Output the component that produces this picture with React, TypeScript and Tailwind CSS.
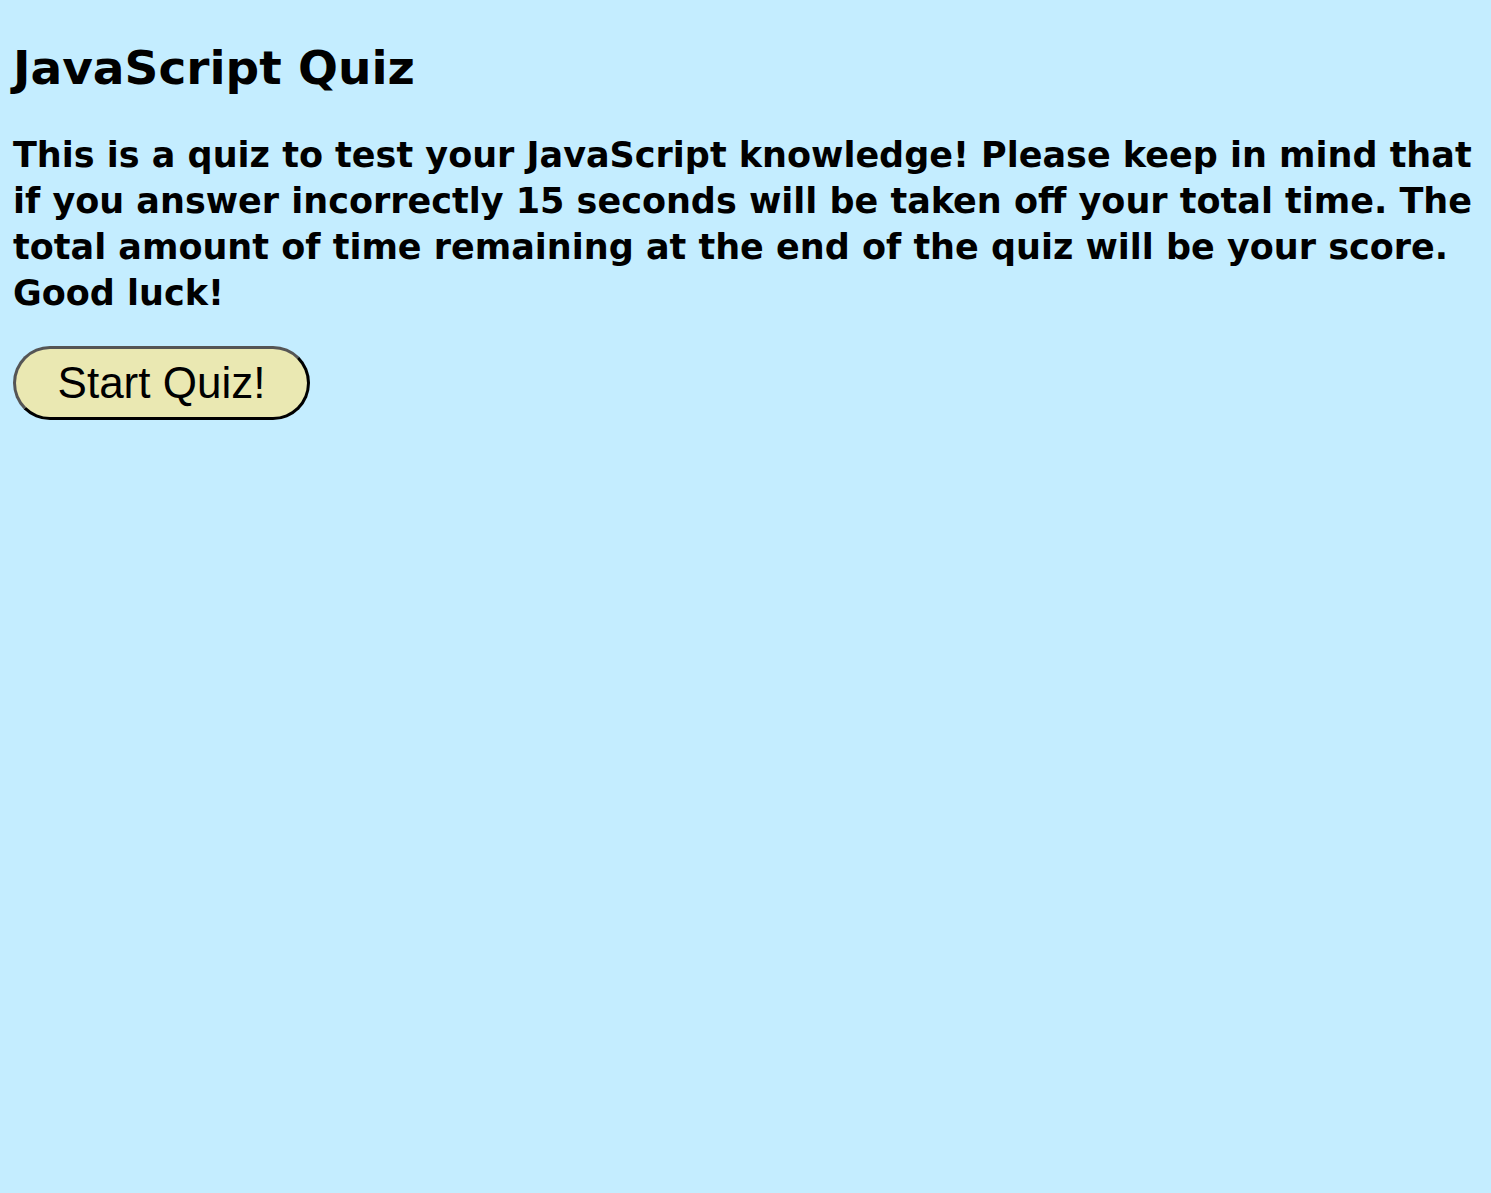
export default function App() {
  return (
    <div className="min-h-[1193px] bg-[#c4edff] pl-[13px] pt-[40px] font-['DejaVu_Sans',sans-serif] text-black">
      <h1 className="text-[47px] font-bold leading-[1.2]">JavaScript Quiz</h1>
      <p className="mt-[36px] text-[35px] font-bold leading-[46px]">
        This is a quiz to test your JavaScript knowledge! Please keep in mind that if you answer incorrectly 15
        seconds will be taken off your total time. The total amount of time remaining at the end of the quiz will
        be your score. Good luck!
      </p>
      <button
        type="button"
        className="mt-[30px] h-[74px] w-[297px] rounded-[37px] border-[3px] border-t-[#555] border-l-[#555] border-r-black border-b-black bg-[#eae8b2] font-['Liberation_Sans',Arial,sans-serif] text-[44px] leading-none"
      >
        Start Quiz!
      </button>
    </div>
  );
}
